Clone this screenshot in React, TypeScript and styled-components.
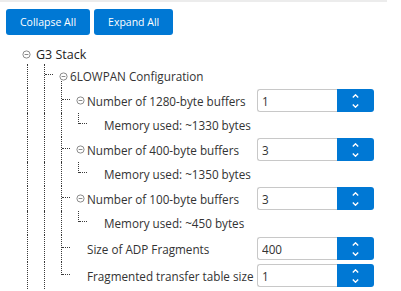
import React from 'react';
import styled, { createGlobalStyle, css } from 'styled-components';

type GuideKind = 'line' | 'tee' | 'elbow';

interface TreeRow {
  id: string;
  guides: GuideKind[];
  label: string;
  height: number;
  toggle?: boolean;
  stem?: boolean;
  root?: boolean;
  value?: string;
}

const rows: TreeRow[] = [
  { id: 'g3', guides: [], label: 'G3 Stack', height: 20, toggle: true, root: true },
  { id: 'lowpan', guides: ['line', 'tee'], label: '6LOWPAN Configuration', height: 24, toggle: true, stem: true },
  { id: 'b1280', guides: ['line', 'line', 'tee'], label: 'Number of 1280-byte buffers', height: 25, toggle: true, value: '1' },
  { id: 'm1280', guides: ['line', 'line', 'line', 'elbow'], label: 'Memory used: ~1330 bytes', height: 24 },
  { id: 'b400', guides: ['line', 'line', 'tee'], label: 'Number of 400-byte buffers', height: 25, toggle: true, value: '3' },
  { id: 'm400', guides: ['line', 'line', 'line', 'elbow'], label: 'Memory used: ~1350 bytes', height: 24 },
  { id: 'b100', guides: ['line', 'line', 'tee'], label: 'Number of 100-byte buffers', height: 25, toggle: true, value: '3' },
  { id: 'm100', guides: ['line', 'line', 'line', 'elbow'], label: 'Memory used: ~450 bytes', height: 24 },
  { id: 'adp', guides: ['line', 'line', 'tee'], label: 'Size of ADP Fragments', height: 27, value: '400' },
  { id: 'frag', guides: ['line', 'line', 'elbow'], label: 'Fragmented transfer table size', height: 27, value: '1' },
];

const fontStack = '"Open Sans", "Segoe UI", "Noto Sans", sans-serif';

const GlobalStyle = createGlobalStyle`
  html, body {
    margin: 0;
    padding: 0;
    background: #ffffff;
  }
  body {
    font-family: ${fontStack};
    color: #333333;
  }
`;

const Page = styled.div`
  width: 401px;
  height: 291px;
  overflow: hidden;
  background: #ffffff;
`;

const TopRule = styled.div`
  width: 387px;
  height: 2px;
  background: #ececec;
`;

const Toolbar = styled.div`
  display: flex;
  gap: 4px;
  padding: 7px 0 0 6px;
`;

const ActionButton = styled.button`
  height: 26px;
  padding: 0 14px;
  border: 0;
  border-radius: 3px;
  background: #0078d4;
  color: #ffffff;
  font-family: ${fontStack};
  font-size: 10.5px;
  cursor: pointer;
`;

const Tree = styled.div`
  margin-top: 9px;
`;

const Row = styled.div<{ $height: number }>`
  display: grid;
  grid-template-columns: 257px 117px;
  height: ${p => p.$height}px;
`;

const Lead = styled.div`
  display: flex;
  align-items: stretch;
  padding-left: 19px;
  min-width: 0;
`;

const dots = '1px dotted #3a3a3a';

const Guide = styled.span<{ $kind: GuideKind }>`
  position: relative;
  flex: 0 0 17px;

  &::before {
    content: '';
    position: absolute;
    left: 8px;
    top: 0;
    ${p => (p.$kind === 'elbow' ? css`height: calc(50% - 1px);` : css`bottom: 0;`)}
    border-left: ${dots};
  }

  ${p =>
    p.$kind !== 'line' &&
    css`
      &::after {
        content: '';
        position: absolute;
        left: 9px;
        right: 0;
        top: calc(50% - 2px);
        border-top: ${dots};
      }
    `}
`;

const ToggleCell = styled.span<{ $stem?: boolean; $root?: boolean }>`
  position: relative;
  flex: 0 0 17px;
  display: flex;
  align-items: center;
  padding-left: ${p => (p.$root ? 3 : 6)}px;
  box-sizing: border-box;

  ${p =>
    p.$stem &&
    css`
      &::before {
        content: '';
        position: absolute;
        left: 8px;
        top: calc(50% + 5px);
        bottom: 0;
        border-left: ${dots};
      }
    `}
`;

const Label = styled.span<{ $root?: boolean }>`
  display: flex;
  align-items: center;
  white-space: nowrap;
  font-size: ${p => (p.$root ? 12.5 : 11.7)}px;
  color: ${p => (p.$root ? '#222222' : '#333333')};
`;

const ValueCell = styled.div`
  display: flex;
  align-items: center;
`;

const NumberInput = styled.input`
  width: 80px;
  height: 23px;
  box-sizing: border-box;
  margin: 0;
  padding: 0 4px;
  border: 1px solid #c8c8c8;
  border-right: 0;
  border-radius: 3px 0 0 3px;
  font-family: ${fontStack};
  font-size: 11.7px;
  color: #333333;
  outline: none;
`;

const Spinner = styled.div`
  width: 37px;
  height: 23px;
  display: flex;
  flex-direction: column;
  align-items: center;
  justify-content: center;
  gap: 6px;
  background: #0078d4;
  border-radius: 0 3px 3px 0;
`;

const MinusCircle = () => (
  <svg width="9" height="9" viewBox="0 0 9 9">
    <circle cx="4.5" cy="4.5" r="3.6" fill="none" stroke="#8a8a8a" strokeWidth="1" />
    <line x1="2.6" y1="4.5" x2="6.4" y2="4.5" stroke="#8a8a8a" strokeWidth="1" />
  </svg>
);

const Chevron = ({ up }: { up?: boolean }) => (
  <svg width="7" height="4" viewBox="0 0 7 4">
    <polyline
      points={up ? '0.8,3.4 3.5,0.8 6.2,3.4' : '0.8,0.6 3.5,3.2 6.2,0.6'}
      fill="none"
      stroke="#ffffff"
      strokeWidth="1.4"
    />
  </svg>
);

export default function App() {
  return (
    <Page>
      <GlobalStyle />
      <TopRule />
      <Toolbar>
        <ActionButton>Collapse All</ActionButton>
        <ActionButton>Expand All</ActionButton>
      </Toolbar>
      <Tree>
        {rows.map(row => (
          <Row key={row.id} $height={row.height}>
            <Lead>
              {row.guides.map((kind, i) => (
                <Guide key={i} $kind={kind} />
              ))}
              <ToggleCell $stem={row.stem} $root={row.root}>
                {row.toggle && <MinusCircle />}
              </ToggleCell>
              <Label $root={row.root}>{row.label}</Label>
            </Lead>
            {row.value !== undefined && (
              <ValueCell>
                <NumberInput readOnly value={row.value} />
                <Spinner>
                  <Chevron up />
                  <Chevron />
                </Spinner>
              </ValueCell>
            )}
          </Row>
        ))}
      </Tree>
    </Page>
  );
}
